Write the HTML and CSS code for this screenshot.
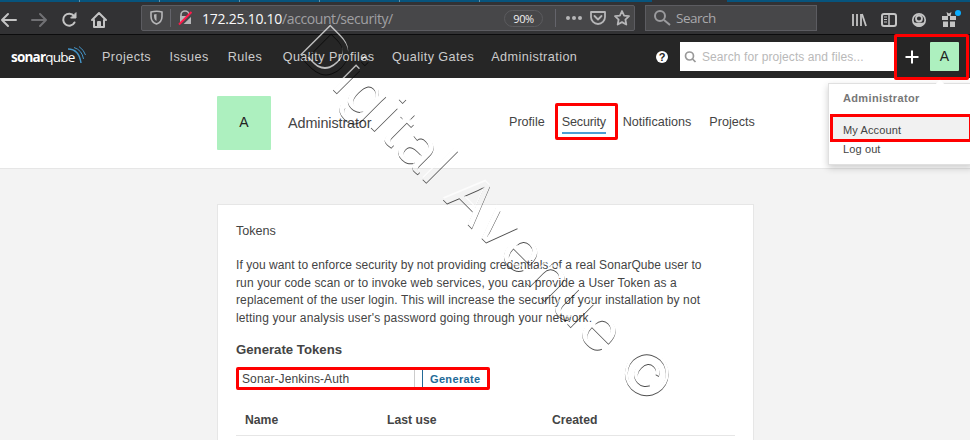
FILE: index.html
```html
<!DOCTYPE html>
<html lang="en">
<head>
<meta charset="utf-8">
<title>Security</title>
<link rel="stylesheet" href="styles.css">
</head>
<body>
<div class="tabs"><i></i><i></i><i></i><i></i><i></i><i></i><b></b></div>
<div class="toolbar">
  <svg class="browser-nav" width="141" height="30" fill="none" stroke="#c4c4c4" stroke-width="2" stroke-linecap="round" stroke-linejoin="round">
    <path d="M16 13H2M8 7L2 13L8 19"/>
    <path stroke="#717174" d="M32 13H46M40 7L46 13L40 19"/>
    <path d="M74.500 15.500A6 6 0 1 1 74 9"/><path d="M76 6V11H71Z" fill="#c4c4c4" stroke-width="1"/>
    <path d="M92 13L99 6L106 13M94 13V20H104V13M98 20V15H100V20"/>
  </svg>
  <div class="address">
    <svg width="55" height="26" fill="none" stroke="#b6b6b8" stroke-width="1.6">
      <path d="M9 7Q15 5.500 20 7V11.500C20 15.500 18 17.700 14.500 19C11 17.700 9 15.500 9 11.500Z"/>
      <path d="M14.500 9V16C12.500 14.800 12 13.500 12 9.500Z" fill="#b6b6b8" stroke="none"/>
      <path d="M28.500 4V22" stroke="#64646b" stroke-width="1"/>
      <path d="M39 11V10a4 4 0 0 1 8 0V11"/><rect x="38" y="11" width="11" height="8" fill="#b6b6b8" stroke="none"/>
      <path d="M38 20.500L51 8" stroke="#474749" stroke-width="3"/><path d="M37 19.500L49.500 7" stroke="#ff194a" stroke-width="2"/>
    </svg>
    <span class="url">172.25.10.10<em>/account/security/</em></span>
    <span class="percent">90%</span>
    <svg class="page-actions" width="79" height="26" fill="none" stroke="#b6b6b8" stroke-width="1.8" stroke-linejoin="round">
      <path d="M.5 4V22" stroke="#64646b" stroke-width="1"/>
      <g fill="#b6b6b8" stroke="none"><circle cx="13" cy="13" r="2"/><circle cx="19" cy="13" r="2"/><circle cx="25" cy="13" r="2"/></g>
      <path d="M36 7H50V12A7 7 0 0 1 36 12ZM39.500 11L43 14.500L46.500 11" stroke-linecap="round"/>
      <path d="M67 6L69.100 10.600L74 11.200L70.400 14.600L71.300 19.500L67 17.100L62.700 19.500L63.600 14.600L60 11.200L64.900 10.600Z"/>
    </svg>
  </div>
  <div class="browser-search"><svg width="30" height="26" fill="none" stroke="#9b9b9e" stroke-width="2"><circle cx="14" cy="11" r="5"/><path d="M18 15L24 20"/></svg>Search</div>
  <svg class="browser-tools" width="119" height="30" fill="none" stroke="#c4c4c4" stroke-width="2">
    <path d="M2 7V19M6 7V19M10 7V19" stroke-width="1.800"/><path d="M11 7L15 19" stroke-width="1.800"/>
    <rect x="31" y="7" width="14" height="12" rx="2"/><path d="M38 7V19" stroke-width="1.500"/><path d="M33 10H36M33 12.500H36M33 15H36" stroke-width="1"/>
    <circle cx="68" cy="13" r="6.200" stroke-width="1.700"/><circle cx="68" cy="11.500" r="3" stroke-width="1.800"/><path d="M62.500 15.500Q68 16 73.500 15.500Q71 20 68 20Q65 20 62.500 15.500Z" fill="#c4c4c4" stroke="none"/>
    <path d="M91 9H97V13H91ZM99 9H105V13H99ZM92 14.500H97V20H92ZM99 14.500H104V20H99ZM95.500 5L98 6.500L100.500 5L99.500 9H96.500Z" fill="#c4c4c4" stroke="none"/><circle cx="107" cy="6" r="3" fill="#0aadff" stroke="none"/>
  </svg>
</div>
<header class="header">
  <div class="logo"><b>sonar</b><span>qube</span><svg width="19" height="18" viewBox="0 0 19 18" fill="none" stroke="#4494c7"><path d="M0 3Q11 3 13 17" stroke-width="1.500"/><path d="M6 1.500Q14 4 15.500 13"/><path d="M11 .5Q16 4 17.500 9"/></svg></div>
  <nav class="mainnav"><a>Projects</a><a>Issues</a><a>Rules</a><a>Quality Profiles</a><a>Quality Gates</a><a>Administration</a></nav>
  <span class="help">?</span>
  <div class="site-search"><svg width="22" height="28" fill="none" stroke="#999" stroke-width="1.700"><circle cx="9.500" cy="13" r="4"/><path d="M12.500 16L15.500 19"/></svg>Search for projects and files...</div>
  <div class="account-button"><svg width="14" height="14" stroke="#fff" stroke-width="2"><path d="M7 .5V13.500M.5 7H13.500"/></svg><span class="avatar">A</span></div>
</header>
<section class="profile">
  <div class="avatar large">A</div><h1>Administrator</h1>
  <nav class="subnav"><a>Profile</a><a class="active"><span>Security</span></a><a>Notifications</a><a>Projects</a></nav>
</section>
<main class="card">
  <h2>Tokens</h2>
  <p><span>If you want to enforce security by not providing credentials of a real SonarQube user to</span><span>run your code scan or to invoke web services, you can provide a User Token as a</span><span>replacement of the user login. This will increase the security of your installation by not</span><span>letting your analysis user's password going through your network.</span></p>
  <h3>Generate Tokens</h3>
  <div class="token-form"><span class="token-name">Sonar-Jenkins-Auth</span><span class="generate">Generate</span></div>
  <div class="table-head"><span>Name</span><span>Last use</span><span>Created</span></div>
</main>
<aside class="menu"><strong>Administrator</strong><a class="selected">My Account</a><a class="logout">Log out</a></aside>
<svg class="watermark" width="970" height="440">
  <defs><filter id="emboss" filterUnits="userSpaceOnUse" x="0" y="0" width="970" height="440" color-interpolation-filters="sRGB">
    <feOffset in="SourceAlpha" dx="0" dy="1" result="down"/><feComposite in="down" in2="SourceAlpha" operator="out" result="lower"/>
    <feFlood flood-color="#000" flood-opacity=".7"/><feComposite in2="lower" operator="in" result="dark"/>
    <feOffset in="SourceAlpha" dx="0" dy="-2" result="up"/><feComposite in="up" in2="SourceAlpha" operator="out" result="upper"/>
    <feFlood flood-color="#fff" flood-opacity=".7"/><feComposite in2="upper" operator="in" result="light"/>
    <feMerge><feMergeNode in="dark"/><feMergeNode in="light"/></feMerge>
  </filter></defs>
  <g filter="url(#emboss)"><text transform="translate(300 58) rotate(45)" x="-6" y="-1" textLength="497">Digital Avenue ©</text></g>
</svg>
</body>
</html>
```
FILE: styles.css
```css
* { box-sizing: border-box; }
body { margin: 0; width: 970px; height: 440px; overflow: hidden; position: relative; background: #f3f3f3; color: #444; font-family: "Liberation Sans", Arial, sans-serif; }
svg { flex: none; }
.tabs { height: 2px; background: #07547d; display: flex; }
.tabs i { width: 80px; border-right: 1px solid #5b91ad; }
.tabs b { width: 75px; margin-left: 172px; background: #323234; }
.toolbar { height: 33px; background: #323234; border-bottom: 1px solid #0c0c0d; display: flex; padding-top: 3px; }
.browser-nav { margin-top: 2px; }
.address { width: 494px; height: 26px; background: #474749; border: 1px solid #5c5c61; border-radius: 2px; display: flex; align-items: center; font: 14px "Open Sans", sans-serif; }
.url { color: #f9f9fa; width: 289px; margin-left: 5px; letter-spacing: -.25px; white-space: nowrap; }
.url em { font-style: normal; color: #a0a0a3; letter-spacing: -.42px; }
.percent { width: 39px; height: 17px; line-height: 16px; text-align: center; border: 1px solid #5b5b5e; border-radius: 9px; color: #f0f0f0; font-size: 11px; letter-spacing: -.4px; margin-left: 14px; }
.page-actions { margin-left: 12px; }
.browser-search { width: 172px; margin-left: 10px; height: 26px; background: #474749; border: 1px solid #5c5c61; display: flex; align-items: center; color: #a9a9ac; font: 13.5px "Open Sans", sans-serif; letter-spacing: -.5px; }
.browser-tools { margin-left: 34px; margin-top: 2px; }
.header { height: 43px; background: #262626; display: flex; align-items: center; color: #ccc; }
.logo { width: 90px; height: 26px; padding-left: 11px; display: flex; font: 13.5px/26px "Open Sans", sans-serif; color: #fff; letter-spacing: -.8px; }
.logo svg { margin: 2px 0 0 -6px; }
.mainnav { display: flex; gap: 18.500px; margin-left: 12px; font-size: 12.6px; letter-spacing: .45px; white-space: nowrap; width: 554px; }
.mainnav a:nth-child(3) { margin: 0 2px 0 .5px; }
.mainnav a:nth-child(5) { margin: 0 -1.5px 0 -1px; }
.help { width: 12px; height: 12px; border-radius: 50%; background: #fff; color: #222; font: bold 11px/12px "Liberation Sans", sans-serif; text-align: center; }
.site-search { width: 214px; height: 29px; background: #fff; margin-left: 12px; display: flex; align-items: center; color: #b9b9b9; font-size: 12px; letter-spacing: .09px; }
.account-button { width: 75px; height: 46px; border: 3px solid #f00; border-radius: 2px; display: flex; align-items: center; padding-left: 8px; gap: 11px; position: relative; }
.avatar { width: 29px; height: 29px; background: #adf0bf; color: #222; display: flex; align-items: center; justify-content: center; font-size: 14px; border-radius: 1px; padding-bottom: 2px; }
.profile { height: 91px; background: #fff; border-bottom: 1px solid #e6e6e6; padding: 18px 0 0 217px; display: flex; }
.large { width: 54px; height: 54px; }
.profile h1 { margin: 18px 0 0 17px; font-size: 14.4px; line-height: 18px; font-weight: 400; width: 221px; letter-spacing: -.1px; }
.subnav { display: flex; font-size: 12.6px; line-height: 18px; white-space: nowrap; padding-top: 7px; }
.subnav a { height: 37px; padding-top: 10px; }
.subnav .active { width: 63px; margin-left: 10px; margin-right: 5px; border: 3px solid #f00; border-radius: 2px; padding: 7px 0 0 4px; }
.active span { display: inline-block; height: 21px; border-bottom: 2px solid #4b9fd5; letter-spacing: -.15px; }
.subnav a:last-child { margin-left: 18px; }
.card { margin: 35px 0 0 217px; width: 537px; height: 240px; background: #fff; border: 1px solid #e6e6e6; padding: 17px 18px; }
.card h2 { font-size: 12.6px; line-height: 18px; margin: 0; font-weight: 400; }
.card p { margin: 17px 0 14px; font-size: 12px; line-height: 17.500px; white-space: nowrap; letter-spacing: .12px; }
.card p span { display: block; }
.card p span:first-child { letter-spacing: .06px; }
.card p span:last-child { letter-spacing: .14px; }
.card h3 { margin: 0; font-size: 13.2px; line-height: 18px; }
.token-form { width: 254px; height: 23px; border: 3px solid #f00; border-radius: 2px; margin-top: 8px; display: flex; font-size: 12px; line-height: 19px; }
.token-name { width: 176px; padding-left: 3px; border-right: 1px solid #ccc; letter-spacing: .1px; }
.generate { border-left: 1px solid #236a97; color: #236a97; margin-left: 7px; padding-left: 7px; font-weight: bold; font-size: 11px; letter-spacing: .35px; }
.table-head { display: grid; grid-template-columns: 142px 165px 1fr; width: 499px; height: 25px; border-bottom: 1px solid #e6e6e6; font-size: 12.2px; font-weight: bold; line-height: 18px; margin-top: 21px; padding: 0 0 0 9px; }
.menu { position: absolute; left: 828px; top: 83px; width: 145px; height: 82px; background: #fff; border: 1px solid #e0e0e0; box-shadow: 0 3px 7px #0003; font-size: 11px; letter-spacing: .12px; }
.menu::before { content: ""; position: absolute; left: 108px; top: -3px; width: 6px; height: 6px; background: #fff; transform: rotate(45deg); }
.menu strong { display: block; color: #777; padding: 7px 0 0 14px; line-height: 15px; letter-spacing: .35px; }
.menu a { display: block; }
.selected { height: 28px; width: 142px; margin: 8px 0 0 1px; padding: 6px 0 0 10px; border: 3px solid #f00; background: #f1f1f1; line-height: 15px; }
.logout { padding: 0 0 0 14px; line-height: 15px; }
.watermark { position: absolute; left: 0; top: 0; pointer-events: none; }
.watermark text { font: 62px "Liberation Sans", sans-serif; }
```
